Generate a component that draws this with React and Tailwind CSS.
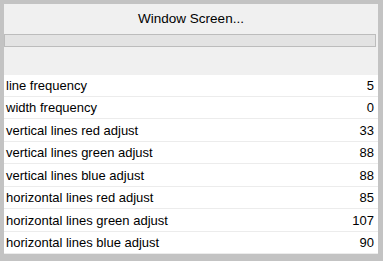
const rows = [
  ["line frequency", 5, "h-[22px]"],
  ["width frequency", 0, "h-[22px]"],
  ["vertical lines red adjust", 33, "h-[23px]"],
  ["vertical lines green adjust", 88, "h-[22px]"],
  ["vertical lines blue adjust", 88, "h-[23px]"],
  ["horizontal lines red adjust", 85, "h-[22px]"],
  ["horizontal lines green adjust", 107, "h-[23px]"],
  ["horizontal lines blue adjust", 90, "h-[22px]"],
];

export default function App() {
  return (
    <div
      className="w-[383px] h-[261px] bg-[#c3c3c3] pt-[4px] pl-[4px] pr-[5px] pb-[7px] text-black"
      style={{ fontFamily: '"Liberation Sans", Arial, sans-serif' }}
    >
      <div className="h-full flex flex-col bg-[#f0f0f0]">
        {/* title */}
        <div className="h-[30px] flex items-center justify-center text-[13.5px] pt-[1px]">
          Window Screen...
        </div>
        {/* progress bar */}
        <div className="h-[13px] border border-[#bcbcbc] bg-[#e3e3e3] mr-[2px]" />
        <div className="h-[28px]" />
        {/* param list */}
        <div className="flex-1 bg-white">
          {rows.map(([label, value, h]) => (
            <div
              key={label}
              className={`${h} flex items-center justify-between border-b border-[#ececec] pl-[2px] pr-[4px] text-[13px] leading-none`}
            >
              <span>{label}</span>
              <span>{value}</span>
            </div>
          ))}
        </div>
      </div>
    </div>
  );
}
